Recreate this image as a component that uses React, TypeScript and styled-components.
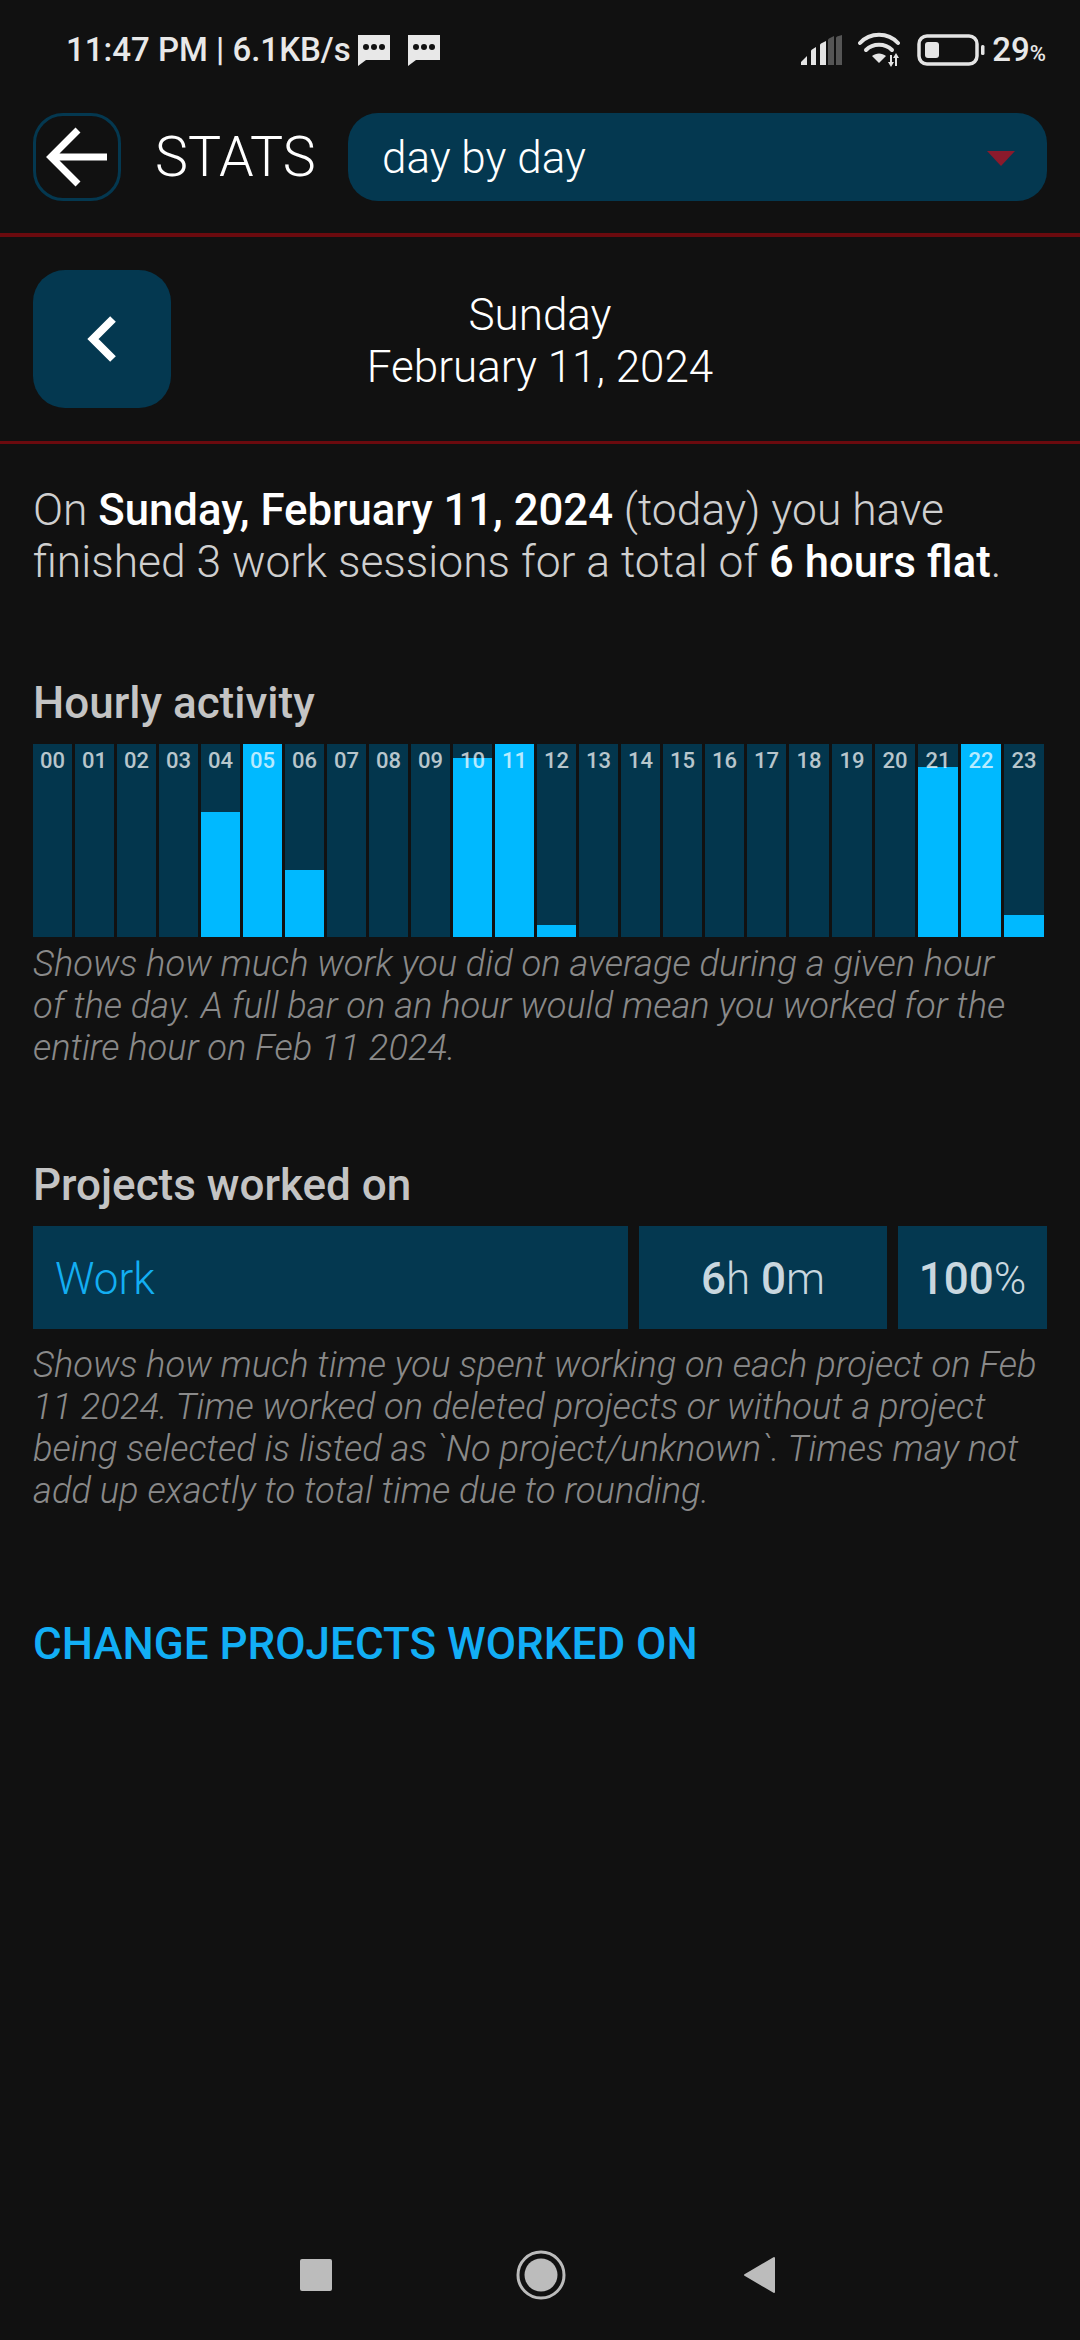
import React from 'react';
import styled, { createGlobalStyle } from 'styled-components';

const GlobalStyle = createGlobalStyle`
  html, body {
    margin: 0;
    padding: 0;
    background: #111111;
  }
  * {
    box-sizing: border-box;
  }
`;

const Page = styled.div`
  width: 1080px;
  height: 2340px;
  display: flex;
  flex-direction: column;
  background: #111111;
  font-family: Roboto, "Liberation Sans", sans-serif;
  color: #ffffff;
  overflow: hidden;
`;

const StatusBar = styled.div`
  height: 113px;
  padding: 31px 34px 0 66px;
  display: flex;
  align-items: flex-start;
  justify-content: space-between;
  color: #e8e8e8;
`;

const StatusGroup = styled.div`
  display: flex;
  align-items: center;
  height: 38px;
`;

const StatusText = styled.span`
  font-size: 33px;
  font-weight: 500;
  line-height: 38px;
  white-space: nowrap;
`;

const Percent = styled.span`
  font-size: 22px;
  font-weight: 500;
  align-self: flex-end;
  line-height: 30px;
`;

const StatusGap = styled.span<{ $width: number }>`
  width: ${(p) => p.$width}px;
  flex: none;
`;

const Toolbar = styled.div`
  display: flex;
  align-items: center;
  padding: 0 33px 32px;
  border-bottom: 4px solid #6b0a0e;
`;

const BackButton = styled.div`
  width: 88px;
  height: 88px;
  flex: none;
  display: flex;
  align-items: center;
  justify-content: center;
  border: 3px solid #043850;
  border-radius: 30px;
`;

const Title = styled.div`
  margin-left: 34px;
  width: 158px;
  flex: none;
  padding-top: 2px;
  font-size: 55.5px;
  font-weight: 300;
  line-height: 86px;
`;

const Dropdown = styled.div`
  flex: 1;
  height: 88px;
  margin-left: 35px;
  padding: 2px 32px 0 34px;
  display: flex;
  align-items: center;
  justify-content: space-between;
  background: #043850;
  border-radius: 30px;
  font-size: 44px;
  font-weight: 300;
`;

const DateRow = styled.div`
  display: flex;
  align-items: center;
  padding: 33px;
  border-bottom: 3px solid #6b0a0e;
`;

const PrevButton = styled.div`
  width: 138px;
  height: 138px;
  flex: none;
  display: flex;
  align-items: center;
  justify-content: center;
  background: #043850;
  border-radius: 32px;
`;

const DateText = styled.div`
  flex: 1;
  margin-right: 138px;
  padding-top: 4px;
  text-align: center;
  font-size: 44px;
  font-weight: 300;
  line-height: 52px;
`;

const Content = styled.div`
  padding: 40px 33px 0;
`;

const Summary = styled.p`
  margin: 0;
  font-size: 44.4px;
  font-weight: 300;
  line-height: 52px;
  color: #cfcfcf;
  white-space: nowrap;

  b {
    font-size: 43.7px;
    font-weight: 500;
    color: #ffffff;
  }
`;

const Heading = styled.h2<{ $top: number }>`
  margin: ${(p) => p.$top}px 0 16px;
  font-size: 44px;
  font-weight: 500;
  line-height: 50px;
  color: #c4c4c4;
`;

const Chart = styled.div`
  display: grid;
  grid-template-columns: repeat(18, 39px) repeat(6, 40px);
  gap: 3px;
  height: 193px;
`;

const Hour = styled.div`
  position: relative;
  display: flex;
  align-items: flex-end;
  background: #03364d;
`;

const Fill = styled.div`
  width: 100%;
  background: #00b9ff;
`;

const HourLabel = styled.span`
  position: absolute;
  top: 2px;
  left: 0;
  right: 0;
  text-align: center;
  font-size: 22px;
  font-weight: 500;
  line-height: 30px;
  color: rgba(255, 255, 255, 0.72);
`;

const Caption = styled.p`
  margin: 6px 0 0;
  font-size: 36.3px;
  font-weight: 300;
  font-style: italic;
  line-height: 42px;
  color: #8a8a8a;
  white-space: nowrap;
`;

const ProjectRow = styled.div`
  display: flex;
  gap: 11px;
  height: 103px;
  margin-bottom: 15px;
`;

const Cell = styled.div<{ $width?: number; $center?: boolean }>`
  ${(p) => (p.$width ? `width: ${p.$width}px; flex: none;` : 'flex: 1;')}
  display: flex;
  align-items: center;
  justify-content: ${(p) => (p.$center ? 'center' : 'flex-start')};
  padding: ${(p) => (p.$center ? '3px 0 0' : '3px 22px 0')};
  background: #043850;
  font-size: 44px;
  font-weight: 300;
  color: #c9d7df;
  white-space: pre;

  b {
    font-weight: 500;
  }
`;

const ProjectName = styled.span`
  color: #13aef2;
`;

const ChangeLink = styled.div`
  margin-top: 106px;
  font-size: 44px;
  font-weight: 500;
  line-height: 52px;
  color: #12aef5;
  white-space: nowrap;
`;

const NavBar = styled.div`
  margin-top: auto;
  height: 130px;
  padding: 0 305px 0 300px;
  display: flex;
  align-items: center;
  justify-content: space-between;

  svg:nth-child(2) {
    margin-left: 5px;
  }
`;

const hours: number[] = Array(24).fill(0);
hours[4] = 0.65;
hours[5] = 1;
hours[6] = 0.347;
hours[10] = 0.93;
hours[11] = 1;
hours[12] = 0.062;
hours[21] = 0.88;
hours[22] = 1;
hours[23] = 0.114;

function Bubble() {
  return (
    <svg width="33" height="32" viewBox="0 0 33 32">
      <path d="M1 1h32v25H9l-8 6z" fill="#e8e8e8" />
      <circle cx="9" cy="13" r="3" fill="#111" />
      <circle cx="17" cy="13" r="3" fill="#111" />
      <circle cx="25" cy="13" r="3" fill="#111" />
    </svg>
  );
}

function Signal() {
  return (
    <svg width="41" height="30" viewBox="0 0 41 30">
      <path d="M0 30v-3l6-6v9z" fill="#e4e4e4" />
      <path d="M10 30V16q0-1 1-1.500L15 12v18z" fill="#e4e4e4" />
      <path d="M19 30V10q0-1 1-1.500L25 6v24z" fill="#e4e4e4" />
      <path d="M27 30V5q0-1 1-1.500L33 1v29z" fill="#555" />
      <path d="M35 30V3q0-1 1-1.500L41 0v30z" fill="#555" />
    </svg>
  );
}

function Wifi() {
  return (
    <svg width="43" height="36" viewBox="0 0 43 36" style={{ marginLeft: 16 }}>
      <g fill="none" stroke="#e4e4e4" strokeWidth="4" strokeLinecap="round">
        <path d="M2 11C12 0 30 0 40 11" />
        <path d="M8 18c7-7 19-7 26 0" />
      </g>
      <path d="M14 24c4-3.500 10-3.500 14 0l-7 7z" fill="#e4e4e4" />
      <g fill="#e4e4e4">
        <path d="M33 22h2v7h2l-3 5-3-5h2z" transform="translate(-1 1)" />
        <path d="M39 34h-2v-8h-2l3-5 3 5h-2z" />
      </g>
    </svg>
  );
}

function Battery() {
  return (
    <svg width="68" height="32" viewBox="0 0 68 32" style={{ marginLeft: 16 }}>
      <rect x="2" y="2" width="58" height="28" rx="8" fill="none" stroke="#e4e4e4" strokeWidth="3.500" />
      <rect x="8" y="8" width="14" height="16" rx="3" fill="#e4e4e4" />
      <rect x="64" y="11" width="3.500" height="10" rx="1.500" fill="#e4e4e4" />
    </svg>
  );
}

export default function App() {
  return (
    <Page>
      <GlobalStyle />
      <StatusBar>
        <StatusGroup>
          <StatusText>11:47 PM | 6.1KB/s</StatusText>
          <StatusGap $width={6} />
          <Bubble />
          <StatusGap $width={17} />
          <Bubble />
        </StatusGroup>
        <StatusGroup>
          <Signal />
          <Wifi />
          <Battery />
          <StatusGap $width={7} />
          <StatusText>29</StatusText>
          <Percent>%</Percent>
        </StatusGroup>
      </StatusBar>

      <Toolbar>
        <BackButton>
          <svg width="62" height="60" viewBox="0 0 62 60">
            <path d="M32 3L5 30l27 27M5 30h56" fill="none" stroke="#fff" strokeWidth="7" />
          </svg>
        </BackButton>
        <Title>STATS</Title>
        <Dropdown>
          day by day
          <svg width="28" height="15" viewBox="0 0 28 15">
            <path d="M0 0h28L14 15z" fill="#8a1a2c" />
          </svg>
        </Dropdown>
      </Toolbar>

      <DateRow>
        <PrevButton>
          <svg width="30" height="46" viewBox="0 0 30 46">
            <path d="M26 3L6 23l20 20" fill="none" stroke="#fff" strokeWidth="8" />
          </svg>
        </PrevButton>
        <DateText>
          Sunday
          <br />
          February 11, 2024
        </DateText>
      </DateRow>

      <Content>
        <Summary>
          On <b>Sunday, February 11, 2024</b> (today) you have
          <br />
          finished 3 work sessions for a total of <b>6 hours flat</b>.
        </Summary>

        <Heading $top={90}>Hourly activity</Heading>
        <Chart>
          {hours.map((value, i) => (
            <Hour key={i}>
              <Fill style={{ height: `${value * 100}%` }} />
              <HourLabel>{String(i).padStart(2, '0')}</HourLabel>
            </Hour>
          ))}
        </Chart>
        <Caption>
          Shows how much work you did on average during a given hour
          <br />
          of the day. A full bar on an hour would mean you worked for the
          <br />
          entire hour on Feb 11 2024.
        </Caption>

        <Heading $top={91}>Projects worked on</Heading>
        <ProjectRow>
          <Cell>
            <ProjectName>Work</ProjectName>
          </Cell>
          <Cell $width={248} $center>
            <b>6</b>h <b>0</b>m
          </Cell>
          <Cell $width={149} $center>
            <b>100</b>%
          </Cell>
        </ProjectRow>
        <Caption>
          Shows how much time you spent working on each project on Feb
          <br />
          11 2024. Time worked on deleted projects or without a project
          <br />
          being selected is listed as `No project/unknown`. Times may not
          <br />
          add up exactly to total time due to rounding.
        </Caption>

        <ChangeLink>CHANGE PROJECTS WORKED ON</ChangeLink>
      </Content>

      <NavBar>
        <svg width="32" height="32" viewBox="0 0 32 32">
          <rect width="32" height="32" rx="2" fill="#bcbcbc" />
        </svg>
        <svg width="50" height="50" viewBox="0 0 50 50">
          <circle cx="25" cy="25" r="23" fill="none" stroke="#bcbcbc" strokeWidth="3" />
          <circle cx="25" cy="25" r="16.500" fill="#bcbcbc" />
        </svg>
        <svg width="31" height="38" viewBox="0 0 31 38">
          <path d="M30 2v34L1 19z" fill="#bcbcbc" stroke="#bcbcbc" strokeWidth="2" strokeLinejoin="round" />
        </svg>
      </NavBar>
    </Page>
  );
}
